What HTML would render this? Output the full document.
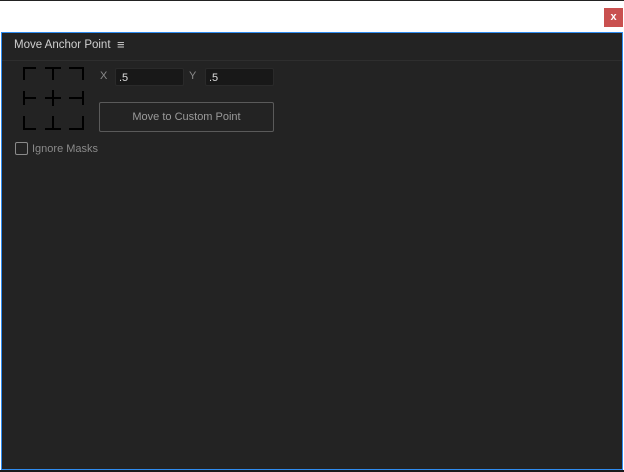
<!DOCTYPE html>
<html><head><style>
body{margin:0;width:624px;height:472px;background:#fff;position:relative;overflow:hidden;font-family:"Liberation Sans",sans-serif}
.top{position:absolute;left:0;top:0;width:624px;height:1px;background:#222}
.bot{position:absolute;left:0;top:470px;width:624px;height:2px;background:#1a1a1a}
.close{position:absolute;left:604px;top:8px;width:19px;height:19px;background:#c9504f;color:#fff;font-size:11px;font-weight:bold;text-align:center;line-height:18px}
.panel{position:absolute;left:1px;top:32px;width:620px;height:436px;border:1px solid #2f8cf0;background:#232323}
.hdr{position:absolute;left:0;top:0;width:620px;height:27px;border-bottom:1px solid #2e2e2e;color:#d0d0d0;font-size:11.5px}
.inp{position:absolute;height:18px;background:#181818;border:1px solid #2a2a2a;border-radius:2px;color:#ddd;font-size:11px;line-height:18px;padding-left:3px;box-sizing:border-box}
.lbl{position:absolute;color:#8a8a8a;font-size:11px}
.btn{position:absolute;left:97px;top:69px;width:175px;height:30px;border:1px solid #5a5a5a;border-radius:2px;color:#9a9a9a;font-size:11px;text-align:center;line-height:28px;box-sizing:border-box}
</style></head><body>
<div class="top"></div>
<div class="bot"></div>
<div class="close">x</div>
<div class="panel">
<div class="hdr"><span style="position:absolute;left:12px;top:6px">Move Anchor Point</span><span style="position:absolute;left:115px;top:4px;font-size:13px">≡</span></div>
<svg style="position:absolute;left:0;top:0" width="100" height="110" viewBox="1 33 100 110">
<g fill="none" stroke="#000" stroke-width="2">
<path d="M23 80V68H35M44 68H60M52 68V80M68 68H82V80"/>
<path d="M23 91V105M23 98H35M44 98H60M52 90V106M82 91V105M68 98H82"/>
<path d="M23 116V129H35M44 129H60M52 116V129M68 129H82V116"/>
</g></svg>
<span class="lbl" style="left:98px;top:37px">X</span>
<div class="inp" style="left:113px;top:35px;width:69px">.5</div>
<span class="lbl" style="left:187px;top:37px">Y</span>
<div class="inp" style="left:203px;top:35px;width:69px">.5</div>
<div class="btn">Move to Custom Point</div>
<div style="position:absolute;left:13px;top:109px;width:11px;height:11px;border:1px solid #8a8a8a;border-radius:2px"></div>
<span class="lbl" style="left:30px;top:110px">Ignore Masks</span>
</div>
</body></html>
